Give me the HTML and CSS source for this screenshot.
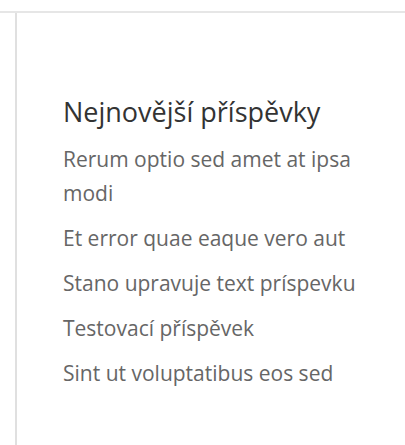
FILE: index.html
```html
<!DOCTYPE html>
<html lang="cs">
<head>
    <meta charset="UTF-8">
    <meta name="viewport" content="width=device-width, initial-scale=1.0">
    <title>Nejnovější příspěvky</title>
    <link rel="stylesheet" href="styles.css">
</head>
<body>
    <div class="topbar"></div>
    <aside class="sidebar">
        <section class="widget">
            <h2>Nejnovější příspěvky</h2>
            <ul>
                <li><a href="#">Rerum optio sed amet at ipsa modi</a></li>
                <li><a href="#">Et error quae eaque vero aut</a></li>
                <li><a href="#">Stano upravuje text príspevku</a></li>
                <li><a href="#">Testovací příspěvek</a></li>
                <li><a href="#">Sint ut voluptatibus eos sed</a></li>
            </ul>
        </section>
    </aside>
</body>
</html>
```

FILE: styles.css
```css
body {
    font-family: "Open Sans", Arial, sans-serif;
    background-color: #fff;
    margin: 0;
    min-height: 100vh;
    display: flex;
    flex-direction: column;
}
.topbar {
    height: 11px;
    border-bottom: 2px solid #e6e6e6;
}
.sidebar {
    flex: 1;
    margin-left: 15px;
    border-left: 2px solid #e0e0e0;
    padding: 82px 20px 0 46px;
}
.widget h2 {
    font-size: 27px;
    font-weight: normal;
    color: #333;
    margin: 0 0 13px;
    line-height: 34px;
}
.widget ul {
    list-style: none;
    margin: 0;
    padding: 0;
}
.widget li {
    font-size: 21px;
    line-height: 34px;
    margin-bottom: 11px;
}
.widget a {
    color: #666;
    text-decoration: none;
}
```
